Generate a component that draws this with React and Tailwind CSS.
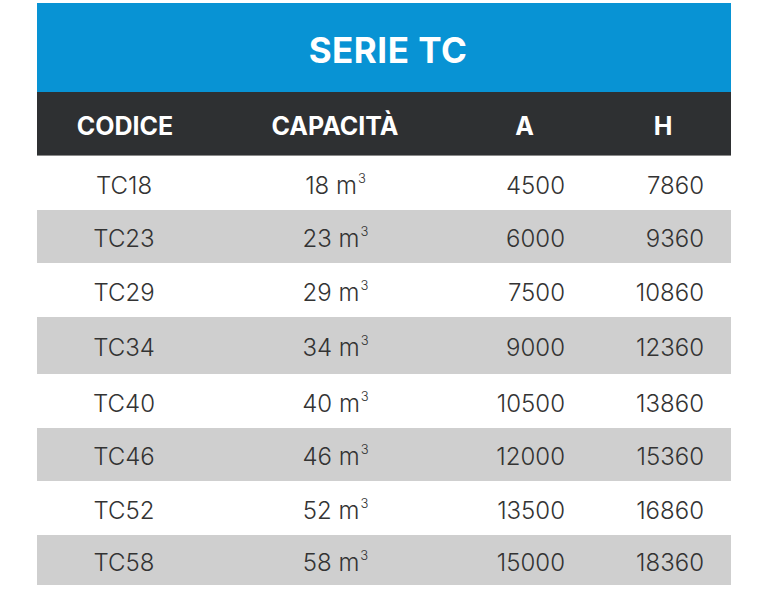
import React from "react";

const rows = [
  ["TC18", "18", "4500", "7860", "h-[54px]", "bg-white"],
  ["TC23", "23", "6000", "9360", "h-[53px]", "bg-[#cfcfcf]"],
  ["TC29", "29", "7500", "10860", "h-[54px]", "bg-white"],
  ["TC34", "34", "9000", "12360", "h-[57px]", "bg-[#cfcfcf]"],
  ["TC40", "40", "10500", "13860", "h-[54px]", "bg-white"],
  ["TC46", "46", "12000", "15360", "h-[53px]", "bg-[#cfcfcf]"],
  ["TC52", "52", "13500", "16860", "h-[54px]", "bg-white"],
  ["TC58", "58", "15000", "18360", "h-[50px]", "bg-[#cfcfcf]"],
];

export default function App() {
  return (
    <div className="w-[768px] h-[589px] bg-white pt-[3px] pl-[37px]" style={{ fontFamily: "Inter, 'Noto Sans', sans-serif" }}>
      <div className="w-[694px]">
        <div className="h-[89px] bg-[#0893d4] flex items-center justify-center">
          <span className="text-white font-bold text-[35px] tracking-[0.5px] pt-[5px] pl-[8px]">SERIE TC</span>
        </div>
        <div className="h-[64px] bg-[#2e3032] grid grid-cols-[176px_244px_143px_131px] items-center text-white font-bold text-[25px] border-b-[1px] border-[#8a8a8a] pt-[6px]">
          <div className="text-center">CODICE</div>
          <div className="text-center">CAPACITÀ</div>
          <div className="text-center pr-[8px]">A</div>
          <div className="text-center pr-[5px]">H</div>
        </div>
        {rows.map(([c, cap, a, h, hh, bg]) => (
          <div key={c} className={`${hh} ${bg} grid grid-cols-[176px_244px_143px_131px] items-center text-[#333333] text-[24px] font-light pt-[5px]`}>
            <div className="text-center pr-[2px]">{c}</div>
            <div className="text-center pl-[1px]">
              {cap} m<span className="text-[13px] relative top-[-11px] ml-[1px]">3</span>
            </div>
            <div className="text-right pr-[35px]">{a}</div>
            <div className="text-right pr-[27px]">{h}</div>
          </div>
        ))}
      </div>
    </div>
  );
}
